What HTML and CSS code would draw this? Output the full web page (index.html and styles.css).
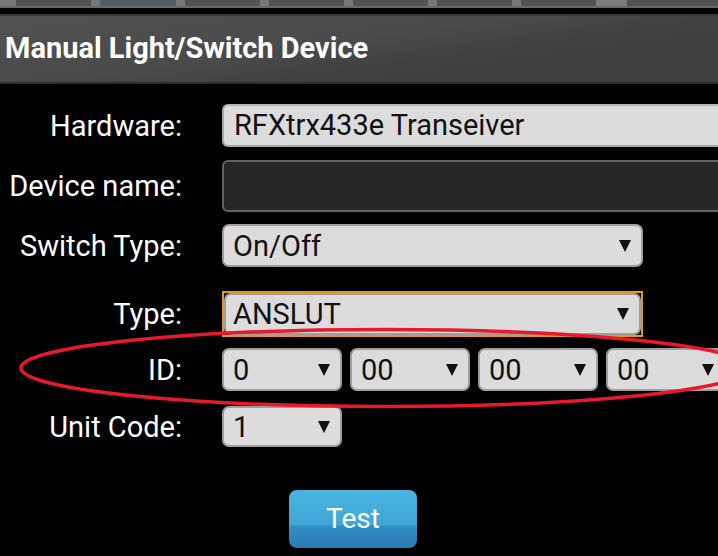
FILE: index.html
```html
<!DOCTYPE html>
<html lang="en">
<head>
    <meta charset="UTF-8">
    <title>Manual Light/Switch Device</title>
    <link rel="stylesheet" href="styles.css">
</head>
<body>
    <div class="tabs">
        <div class="tab-gap gap-first"></div>
        <div class="tab"></div>
        <div class="tab-gap"></div>
        <div class="tab tab-active"></div>
        <div class="tab-gap"></div>
        <div class="tab"></div>
        <div class="tab-gap"></div>
        <div class="tab"></div>
        <div class="tab-gap"></div>
        <div class="tab"></div>
        <div class="tab-gap"></div>
        <div class="tab"></div>
        <div class="tab-gap"></div>
        <div class="tab"></div>
        <div class="tab-gap gap-wide"></div>
        <div class="tab tab-last"></div>
    </div>
    <div class="tabs-line"></div>

    <div class="header">
        <h1 class="title">Manual Light/Switch Device</h1>
    </div>

    <div class="form">
        <div class="row row-hardware">
            <label class="label">Hardware:</label>
            <div class="field field-light">RFXtrx433e Transeiver</div>
        </div>

        <div class="row row-name">
            <label class="label">Device name:</label>
            <input class="field field-dark" type="text">
        </div>

        <div class="row row-switch">
            <label class="label">Switch Type:</label>
            <div class="select select-wide">
                <span class="select-value">On/Off</span>
                <span class="select-arrow"></span>
            </div>
        </div>

        <div class="row row-type">
            <label class="label">Type:</label>
            <div class="focus-ring">
                <div class="select select-focus">
                    <span class="select-value">ANSLUT</span>
                    <span class="select-arrow"></span>
                </div>
            </div>
        </div>

        <div class="row row-id">
            <label class="label">ID:</label>
            <div class="id-group">
                <div class="select select-small">
                    <span class="select-value">0</span>
                    <span class="select-arrow"></span>
                </div>
                <div class="select select-small">
                    <span class="select-value">00</span>
                    <span class="select-arrow"></span>
                </div>
                <div class="select select-small">
                    <span class="select-value">00</span>
                    <span class="select-arrow"></span>
                </div>
                <div class="select select-small">
                    <span class="select-value">00</span>
                    <span class="select-arrow"></span>
                </div>
            </div>
        </div>

        <div class="row row-unit">
            <label class="label">Unit Code:</label>
            <div class="select select-small select-unit">
                <span class="select-value">1</span>
                <span class="select-arrow"></span>
            </div>
        </div>

        <div class="row row-test">
            <div class="label"></div>
            <button class="test-button">Test</button>
        </div>
    </div>

    <!-- red marker drawn over the ID row -->
    <svg class="marker" width="718" height="556" viewBox="0 0 718 556">
        <ellipse cx="385" cy="368" rx="364" ry="38.5" fill="none" stroke="#e8192a" stroke-width="3.5"/>
    </svg>
</body>
</html>
```

FILE: styles.css
```css
body {
    margin: 0;
    background: #000;
    color: #fff;
    font-family: Roboto, "Liberation Sans", sans-serif;
    overflow: hidden;
    height: 556px;
    position: relative;
}

.tabs {
    display: flex;
    height: 6px;
}

.tab {
    width: 75px;
    flex: none;
    background: #535353;
}

.tab-active {
    width: 76px;
    background: #4f5e69;
}

.tab-last {
    flex: 1;
}

.tab-gap {
    width: 9px;
    flex: none;
    background: #787878;
}

.gap-first {
    width: 16px;
}

.gap-wide {
    width: 31px;
    background: #7c7c7c;
}

.tabs-line {
    height: 2px;
    background: #6a6a6a;
}

.header {
    margin-top: 6px;
    height: 66px;
    border-top: 2px solid #3a3a3a;
    border-bottom: 2px solid #2c2c2c;
    background: linear-gradient(172deg, #515151 0%, #4a4a4a 45%, #414141 60%, #3f3f3f 100%);
    display: flex;
    align-items: center;
}

.title {
    margin: 0 0 2px 5px;
    font-size: 29px;
    line-height: 1;
    font-weight: bold;
    white-space: nowrap;
}

.form {
    padding-top: 20px;
    overflow: hidden;
}

.row {
    display: flex;
    align-items: center;
    font-size: 29px;
}

.label {
    flex: none;
    width: 182px;
    margin-right: 40px;
    text-align: right;
    white-space: nowrap;
}

.row-name { margin-top: 13px; }
.row-switch { margin-top: 12px; }
.row-type { margin-top: 24px; }
.row-id { margin-top: 11px; }
.row-unit { margin-top: 15px; }
.row-test { margin-top: 43px; }

.field {
    flex: none;
    box-sizing: border-box;
    width: 540px;
    border-radius: 6px;
    font-family: inherit;
    font-size: 29px;
}

.field-light {
    height: 43px;
    line-height: 39px;
    padding: 0 10px;
    background: #dcdcdc;
    border: 2px solid #a9a9a9;
    border-top-color: #b4b4b4;
    color: #111;
    white-space: nowrap;
}

.field-dark {
    height: 52px;
    margin: 0;
    padding: 0 10px;
    background: #262626;
    border: 2px solid #626262;
    color: #fff;
    outline: none;
}

.select {
    flex: none;
    box-sizing: border-box;
    position: relative;
    height: 43px;
    padding: 0 30px 0 9px;
    background: #dcdcdc;
    border: 2px solid #9e9e9e;
    border-radius: 7px;
    color: #111;
    display: flex;
    align-items: center;
    white-space: nowrap;
}

.select-arrow {
    position: absolute;
    right: 10px;
    top: 50%;
    margin-top: -6px;
    width: 0;
    height: 0;
    border-left: 6px solid transparent;
    border-right: 6px solid transparent;
    border-top: 12px solid #111;
}

.select-wide {
    width: 421px;
}

.focus-ring {
    border: 2px solid #e29a0e;
}

.select-focus {
    width: 417px;
    height: 42px;
    padding-left: 7px;
}

.id-group {
    display: flex;
    gap: 8px;
}

.select-small {
    width: 120px;
}

.select-unit {
    height: 41px;
}

.test-button {
    margin-left: 67px;
    width: 128px;
    height: 58px;
    border: none;
    border-radius: 8px;
    background: linear-gradient(#4bb5de 0%, #40a6d6 60%, #3190c7 62%, #2a7ab1 100%);
    color: #fff;
    font-family: inherit;
    font-size: 28px;
    padding: 0 0 2px;
    cursor: pointer;
}

.marker {
    position: absolute;
    top: 0;
    left: 0;
    pointer-events: none;
}
```
